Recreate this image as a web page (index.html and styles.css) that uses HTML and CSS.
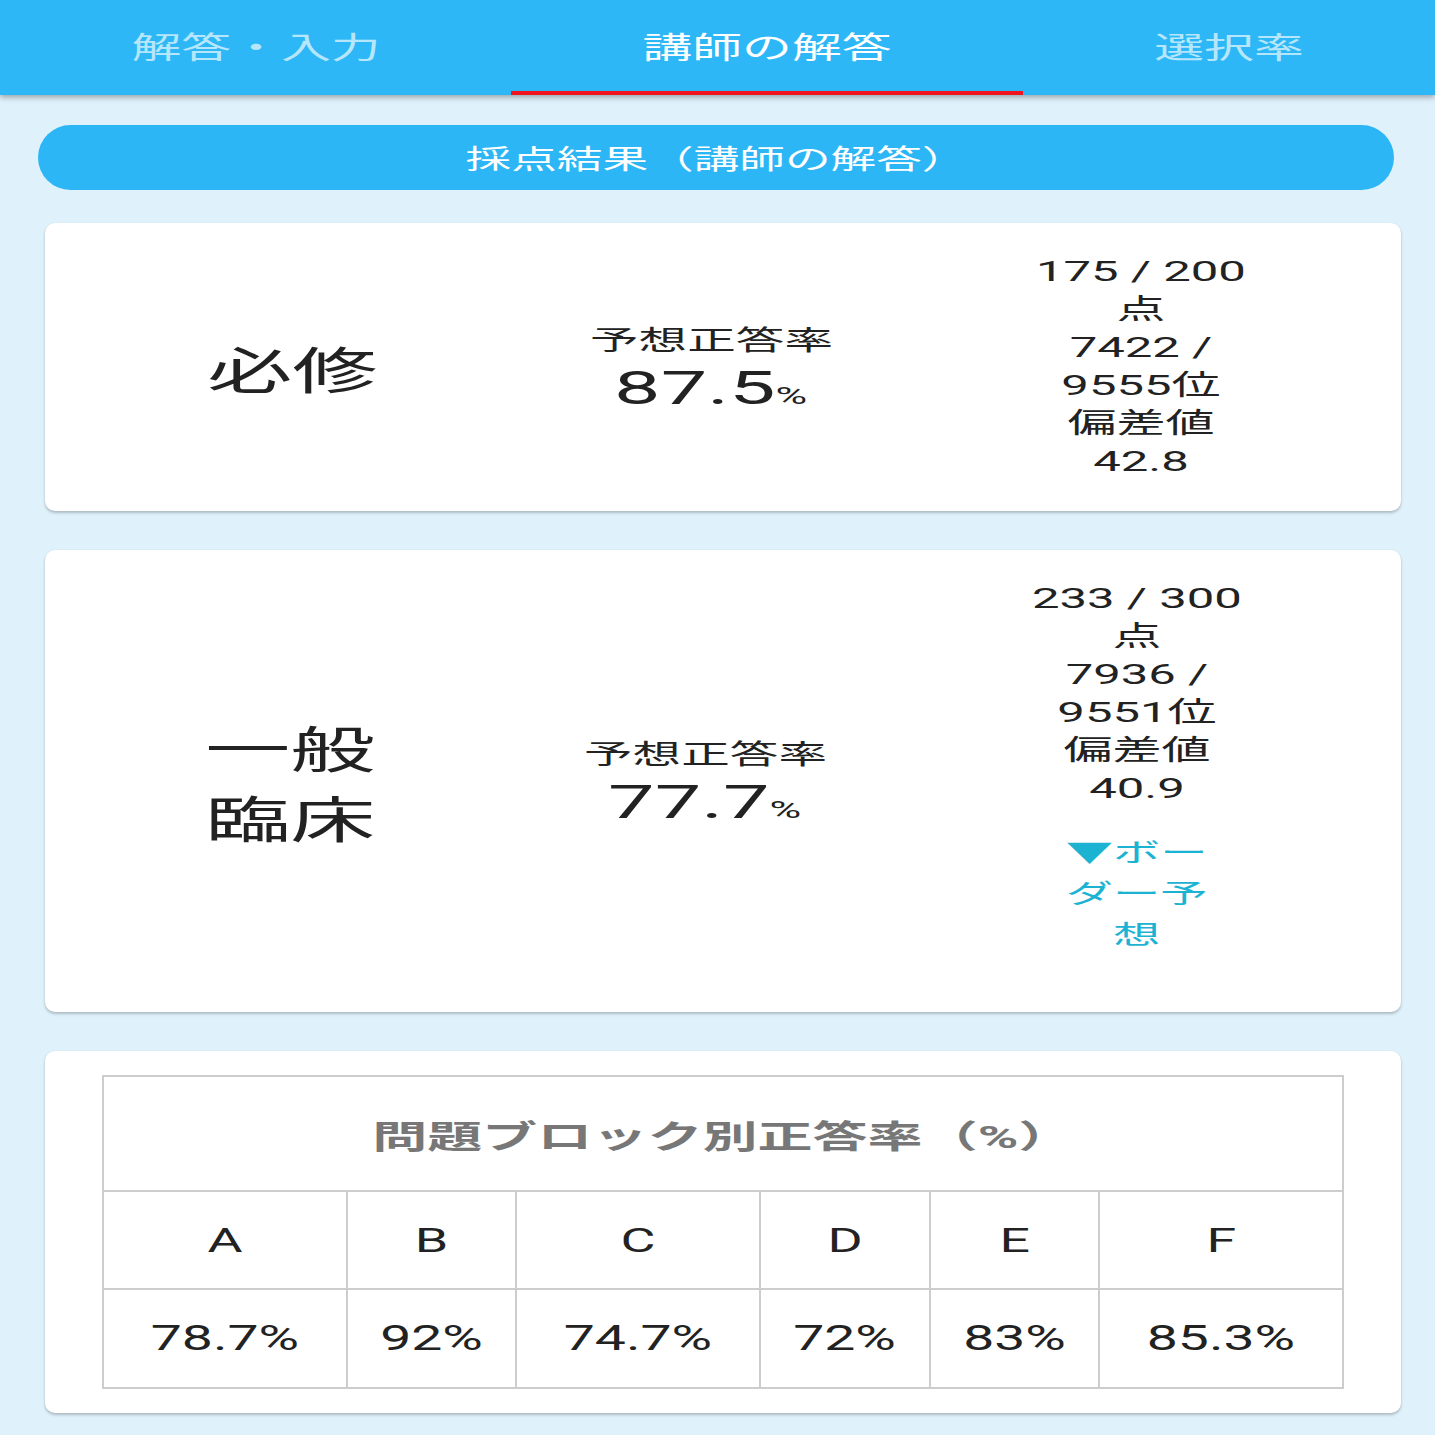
FILE: index.html
```html
<!DOCTYPE html>
<html lang="ja">
<head>
    <meta charset="UTF-8">
    <meta name="viewport" content="width=device-width, initial-scale=1.0">
    <title>講師の解答</title>

    <link rel="stylesheet" href="styles.css">
</head>
<body>
    <header class="tabs">
        <a class="tab" href="#"><span class="tab-label">解答・入力</span></a>
        <a class="tab active" href="#"><span class="tab-label">講師の解答</span></a>
        <a class="tab" href="#"><span class="tab-label">選択率</span></a>
    </header>

    <main class="content">
        <div class="section-title"><span>採点結果（講師の解答）</span></div>

        <section class="card result">
            <div class="subject"><span>必修</span></div>
            <div class="rate">
                <span class="rate-label">予想正答率</span>
                <span class="rate-value">87.5<small>%</small></span>
            </div>
            <div class="rank">
                <p class="stat">175 / 200<br>点<br>7422 /<br>9555位<br>偏差値<br>42.8</p>
            </div>
        </section>

        <section class="card result wide-rank">
            <div class="subject"><span>一般臨床</span></div>
            <div class="rate">
                <span class="rate-label">予想正答率</span>
                <span class="rate-value">77.7<small>%</small></span>
            </div>
            <div class="rank">
                <p class="stat">233 / 300<br>点<br>7936 /<br>9551位<br>偏差値<br>40.9</p>
                <a class="border-link" href="#">▼ボーダー予想</a>
            </div>
        </section>

        <section class="card blocks">
            <table>
                <colgroup>
                    <col class="wide"><col class="narrow"><col class="wide">
                    <col class="narrow"><col class="narrow"><col class="wide">
                </colgroup>
                <tr class="block-title">
                    <th colspan="6"><span>問題ブロック別正答率（%）</span></th>
                </tr>
                <tr class="block-head">
                    <td><span>A</span></td>
                    <td><span>B</span></td>
                    <td><span>C</span></td>
                    <td><span>D</span></td>
                    <td><span>E</span></td>
                    <td><span>F</span></td>
                </tr>
                <tr class="block-rate">
                    <td><span>78.7%</span></td>
                    <td><span>92%</span></td>
                    <td><span>74.7%</span></td>
                    <td><span>72%</span></td>
                    <td><span>83%</span></td>
                    <td><span>85.3%</span></td>
                </tr>
            </table>
        </section>
    </main>
</body>
</html>
```

FILE: styles.css
```css
*{
    margin: 0;
    padding: 0;
    box-sizing: border-box;
}
body{
    background: #dff1fb;
    color: #222;
    font-family: Roboto, "Noto Sans CJK JP", sans-serif;
}

/* top tab bar */
.tabs{
    display: grid;
    grid-template-columns: 1.24fr 1.24fr 1fr;
    height: 95px;
    background: #2db7f6;
    box-shadow: 0 2px 6px rgba(0, 0, 0, 0.35);
}
.tab{
    display: flex;
    align-items: center;
    justify-content: center;
    padding-bottom: 2px;
    border-bottom: 4px solid transparent;
    color: #b5e6fb;
    font-size: 30px;
    text-decoration: none;
}
.tab.active{
    color: #fff;
    border-bottom-color: #f0141e;
}
.tab-label{
    display: inline-block;
    transform: scaleX(1.66);
}

.content{
    padding: 30px 34px 23px 45px;
}
.section-title{
    display: flex;
    align-items: center;
    justify-content: center;
    height: 65px;
    margin: 0 7px 33px -7px;
    border-radius: 33px;
    background: #2db6f5;
    color: #fff;
    font-size: 27px;
}
.section-title span{
    display: inline-block;
    transform: scaleX(1.69);
}

.card{
    background: #fff;
    border-radius: 10px;
    box-shadow: 0 2px 3px rgba(0, 0, 0, 0.22), 0 0 2px rgba(0, 0, 0, 0.06);
    margin-bottom: 39px;
}

/* score cards */
.result{
    display: grid;
    grid-template-columns: 420px 418px 1fr;
    align-items: center;
    padding: 30px 39px 30px 37px;
    text-align: center;
}
.result.wide-rank{
    grid-template-columns: 416px 414px 1fr;
}
.subject{
    padding-top: 10px;
}
.subject span{
    display: inline-block;
    width: 2.05em;
    font-size: 50px;
    line-height: 70px;
    transform: scaleX(1.7);
}
.rate,
.rank{
    display: flex;
    flex-direction: column;
    align-items: center;
}
.rate{
    padding-top: 10px;
}
.rate-label{
    font-size: 27px;
    line-height: 38px;
    transform: scaleX(1.8);
}
.rate-value{
    margin-top: 2px;
    font-size: 46px;
    line-height: 52px;
    transform: scaleX(1.8);
}
.rate-value small{
    font-size: 24px;
}
.stat{
    font-size: 28px;
    line-height: 38px;
    transform: scaleX(1.75);
}
.border-link{
    width: 3.05em;
    margin: 25px 0 26px;
    color: #1cb3d3;
    font-size: 26px;
    line-height: 41px;
    text-decoration: none;
    transform: scaleX(1.82);
}

/* block table */
.blocks{
    padding: 24px 57px;
}
.blocks table{
    width: 100%;
    border-collapse: collapse;
    table-layout: fixed;
    text-align: center;
}
.blocks col.wide{
    width: 19.65%;
}
.blocks col.narrow{
    width: 13.69%;
}
.blocks th,
.blocks td{
    border: 2px solid #cdcdcd;
}
.blocks span{
    display: inline-block;
    transform: scaleX(1.58);
}
.block-title th{
    height: 115px;
    color: #777;
    font-size: 32px;
    font-weight: 700;
}
.block-title span{
    transform: scaleX(1.72);
}
.block-head td{
    height: 98px;
    font-size: 34px;
}
.block-rate td{
    height: 99px;
    font-size: 35px;
}
```
